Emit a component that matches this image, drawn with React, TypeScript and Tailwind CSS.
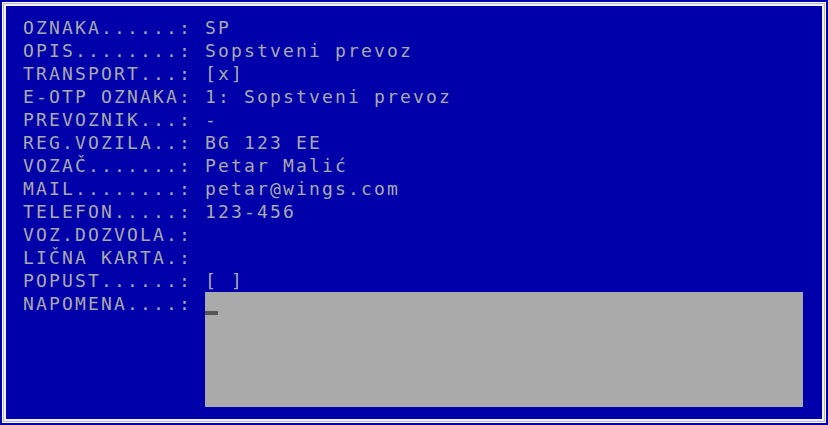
const rows: [string, string][] = [
  ['OZNAKA......: ', 'SP'],
  ['OPIS........: ', 'Sopstveni prevoz'],
  ['TRANSPORT...: ', '[x]'],
  ['E-OTP OZNAKA: ', '1: Sopstveni prevoz'],
  ['PREVOZNIK...: ', '-'],
  ['REG.VOZILA..: ', 'BG 123 EE'],
  ['VOZAČ.......: ', 'Petar Malić'],
  ['MAIL........: ', 'petar@wings.com'],
  ['TELEFON.....: ', '123-456'],
  ['VOZ.DOZVOLA.: ', ''],
  ['LIČNA KARTA.: ', ''],
  ['POPUST......: ', '[ ]'],
];

function Row({ label, value }: { label: string; value: string }) {
  return (
    <div className="flex h-[23px]">
      <span className="w-[182px] shrink-0 whitespace-pre">{label}</span>
      <span className="whitespace-pre">{value}</span>
    </div>
  );
}

export default function App() {
  return (
    <div className="h-[425px] w-[828px] bg-[#0000aa] p-[2px]">
      <div className="h-full border border-white bg-[#b4b4dc] p-[1px]">
        <div className="h-full border-2 border-[#f0f0f8] bg-[#0000aa] pl-[17px] pt-[10px] font-['DejaVu_Sans_Mono',monospace] text-[18px] leading-[23px] tracking-[2.16px] text-[#aaaaaa]">
          {rows.map(([label, value]) => (
            <Row key={label} label={label} value={value} />
          ))}
          <div className="flex">
            <span className="w-[182px] shrink-0 whitespace-pre">NAPOMENA....: </span>
            <div className="h-[115px] w-[598px] bg-[#aaaaaa] pt-[19px]">
              <div className="h-[4px] w-[13px] bg-[#555555]" />
            </div>
          </div>
        </div>
      </div>
    </div>
  );
}
